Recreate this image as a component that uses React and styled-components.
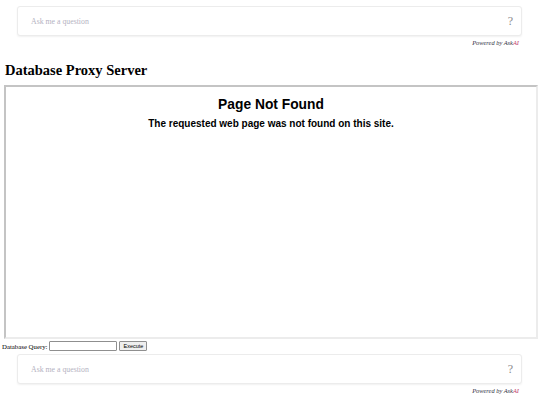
import React from 'react';
import styled, { createGlobalStyle } from 'styled-components';

const GlobalStyle = createGlobalStyle`
  html, body {
    margin: 0;
    padding: 0;
    background: #ffffff;
  }

  body {
    font-family: "Liberation Serif", "Times New Roman", serif;
    color: #000000;
  }
`;

const StyledPage = styled.div`
  width: 540px;
  height: 405px;
  overflow: hidden;
`;

const StyledAskWrapper = styled.div`
  padding-top: ${({ top }) => top}px;
  padding-left: 17px;
  width: 505px;
`;

const StyledAskBar = styled.div`
  display: flex;
  align-items: center;
  justify-content: space-between;
  box-sizing: border-box;
  height: 30px;
  padding: 0 8px 0 13px;
  border: 1px solid #ececec;
  border-radius: 3px;
  box-shadow: 0 1px 2px rgba(0, 0, 0, 0.06);
  background: #ffffff;
`;

const StyledPlaceholder = styled.span`
  font-size: 7.8px;
  color: #b4b2c2;
`;

const StyledQuestionMark = styled.span`
  font-size: 12px;
  color: #8a8a8a;
`;

const StyledPowered = styled.div`
  margin-top: 3px;
  padding-right: 3px;
  text-align: right;
  font-size: 6.4px;
  line-height: 8px;
  font-style: italic;
  color: #333344;

  em {
    color: #c2406a;
  }
`;

const StyledHeading = styled.h2`
  margin: 15px 0 0 5px;
  font-size: 14.5px;
  line-height: 17px;
  font-weight: 700;
`;

const StyledFrame = styled.div`
  box-sizing: border-box;
  margin: 6px 0 0 4px;
  width: 534px;
  height: 254px;
  padding-top: 10px;
  border: 2px solid #ececec;
  border-top-color: #c4c4c4;
  border-left-color: #c4c4c4;
  font-family: "Liberation Sans", Arial, sans-serif;
  text-align: center;
`;

const StyledFrameTitle = styled.h1`
  margin: 0;
  font-size: 13.8px;
  line-height: 16px;
  font-weight: 700;
`;

const StyledFrameText = styled.p`
  margin: 5px 0 0;
  font-size: 10px;
  line-height: 12px;
  font-weight: 700;
`;

const StyledQueryForm = styled.form`
  display: flex;
  align-items: center;
  gap: 2px;
  height: 10px;
  margin: 2px 0 0 2px;
  font-size: 6.8px;
`;

const StyledQueryInput = styled.input`
  box-sizing: border-box;
  width: 68px;
  height: 10px;
  margin: 0;
  padding: 0;
  border: 1px solid #8f8f8f;
  border-radius: 1px;
`;

const StyledQueryButton = styled.button`
  box-sizing: border-box;
  height: 10px;
  margin: 0;
  padding: 0 3px;
  font-family: "Liberation Sans", Arial, sans-serif;
  font-size: 5.5px;
  line-height: 8px;
  background: #efefef;
  border: 1px solid #8f8f8f;
  border-radius: 1px;
  color: #000000;
`;

const AskBlock = ({ top }) => (
  <StyledAskWrapper top={top}>
    <StyledAskBar>
      <StyledPlaceholder>Ask me a question</StyledPlaceholder>
      <StyledQuestionMark>?</StyledQuestionMark>
    </StyledAskBar>
    <StyledPowered>
      Powered by Ask<em>AI</em>
    </StyledPowered>
  </StyledAskWrapper>
);

export default function App() {
  return (
    <StyledPage>
      <GlobalStyle />
      <AskBlock top={6} />
      <StyledHeading>Database Proxy Server</StyledHeading>
      <StyledFrame>
        <StyledFrameTitle>Page Not Found</StyledFrameTitle>
        <StyledFrameText>
          The requested web page was not found on this site.
        </StyledFrameText>
      </StyledFrame>
      <StyledQueryForm onSubmit={e => e.preventDefault()}>
        Database Query:
        <StyledQueryInput type="text" name="query" />
        <StyledQueryButton type="submit">Execute</StyledQueryButton>
      </StyledQueryForm>
      <AskBlock top={3} />
    </StyledPage>
  );
}
